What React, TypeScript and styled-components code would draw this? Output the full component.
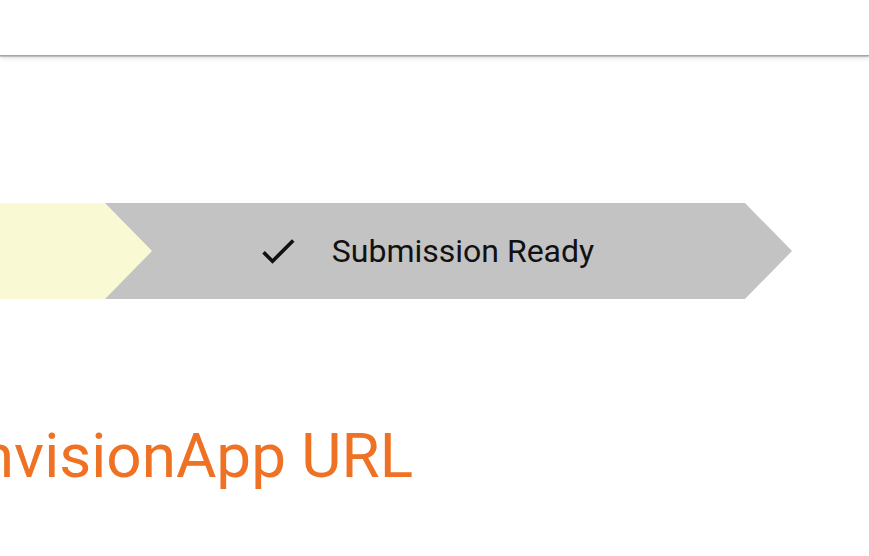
import React from "react";
import styled, { createGlobalStyle } from "styled-components";

const GlobalStyle = createGlobalStyle`
  html, body {
    margin: 0;
    padding: 0;
    background: #ffffff;
    overflow: hidden;
  }
  body {
    font-family: Roboto, "Liberation Sans", Arial, sans-serif;
  }
`;

const Page = styled.div`
  width: 869px;
  height: 556px;
  display: flex;
  flex-direction: column;
  overflow: hidden;
`;

const Header = styled.header`
  height: 55px;
  flex: none;
  background: #ffffff;
  box-shadow: 0 1px 0 #a6a6a6, 0 2px 1px rgba(0, 0, 0, 0.18), 0 3px 5px rgba(0, 0, 0, 0.12);
  position: relative;
  z-index: 1;
`;

const Main = styled.main`
  display: flex;
  flex-direction: column;
  padding-top: 148px;
`;

const Stepper = styled.ol`
  display: flex;
  list-style: none;
  margin: 0 0 0 -535px;
  padding: 0;
  height: 96px;
`;

const ARROW = 47;

const Step = styled.li<{ $tone: "current" | "pending"; $first?: boolean }>`
  flex: none;
  width: 687px;
  height: 96px;
  box-sizing: border-box;
  margin-left: ${(p) => (p.$first ? 0 : -ARROW)}px;
  padding-right: ${ARROW}px;
  display: flex;
  align-items: center;
  justify-content: center;
  gap: 32px;
  background: ${(p) => (p.$tone === "current" ? "#f9f9d3" : "#c3c3c3")};
  color: #111111;
  font-size: 32px;
  clip-path: ${(p) =>
    p.$first
      ? `polygon(0 0, calc(100% - ${ARROW}px) 0, 100% 50%, calc(100% - ${ARROW}px) 100%, 0 100%)`
      : `polygon(0 0, calc(100% - ${ARROW}px) 0, 100% 50%, calc(100% - ${ARROW}px) 100%, 0 100%, ${ARROW}px 50%)`};
`;

const StepIcon = styled.svg`
  width: 44px;
  height: 44px;
  flex: none;
  fill: #111111;
`;

const StepLabel = styled.span`
  white-space: nowrap;
  letter-spacing: 0;
`;

const Title = styled.h1`
  margin: 120px 0 0 -37px;
  font-family: Roboto, "Liberation Sans", Arial, sans-serif;
  font-weight: 400;
  font-size: 62px;
  line-height: 1.2;
  color: #ef7124;
  white-space: nowrap;
`;

const CheckIcon = () => (
  <StepIcon viewBox="0 0 24 24" aria-hidden="true">
    <path d="M9 16.17 4.83 12l-1.42 1.41L9 19 21 7l-1.41-1.41z" />
  </StepIcon>
);

export default function App() {
  return (
    <Page>
      <GlobalStyle />
      <Header />
      <Main>
        <Stepper>
          <Step $tone="current" $first aria-label="Current step" />
          <Step $tone="pending">
            <CheckIcon />
            <StepLabel>Submission Ready</StepLabel>
          </Step>
        </Stepper>
        <Title>InvisionApp URL</Title>
      </Main>
    </Page>
  );
}
